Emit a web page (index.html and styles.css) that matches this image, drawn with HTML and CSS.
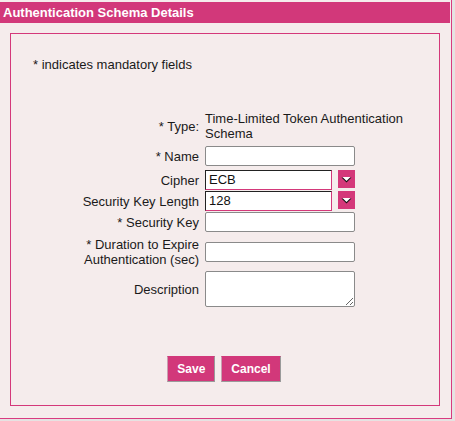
FILE: index.html
```html
<!DOCTYPE html>
<html>
<head>
<meta charset="utf-8">
<link rel="stylesheet" href="styles.css">
</head>
<body>
<div class="panel">
  <div class="panel-head">Authentication Schema Details</div>
  <div class="inner">
    <p class="note">* indicates mandatory fields</p>
    <div class="form">
      <div class="row row-type">
        <div class="label">* Type:</div>
        <div class="value">Time-Limited Token Authentication Schema</div>
      </div>
      <div class="row row-name">
        <div class="label">* Name</div>
        <input class="text" type="text">
      </div>
      <div class="row row-cipher">
        <div class="label">Cipher</div>
        <div class="select">ECB</div>
        <span class="drop"><svg width="17" height="18" viewBox="0 0 17 18"><rect width="17" height="18" fill="#d4387a"/><polygon points="3.5,7.5 13.5,7.5 8.5,12.5" fill="#111"/><polygon points="4.5,7 12.5,7 8.5,11" fill="#fff"/></svg></span>
      </div>
      <div class="row row-skl">
        <div class="label">Security Key Length</div>
        <div class="select">128</div>
        <span class="drop"><svg width="17" height="18" viewBox="0 0 17 18"><rect width="17" height="18" fill="#d4387a"/><polygon points="3.5,7.5 13.5,7.5 8.5,12.5" fill="#111"/><polygon points="4.5,7 12.5,7 8.5,11" fill="#fff"/></svg></span>
      </div>
      <div class="row row-sk">
        <div class="label">* Security Key</div>
        <input class="text" type="text">
      </div>
      <div class="row row-dur">
        <div class="label">* Duration to Expire<br>Authentication (sec)</div>
        <input class="text" type="text">
      </div>
      <div class="row row-desc">
        <div class="label">Description</div>
        <textarea class="area"></textarea>
      </div>
    </div>
    <div class="buttons">
      <button class="btn">Save</button>
      <button class="btn">Cancel</button>
    </div>
  </div>
</div>
</body>
</html>
```

FILE: styles.css
```css
html, body {
  margin: 0;
  padding: 0;
}
body {
  background: #e6e2e2;
  font-family: "Liberation Sans", Arial, sans-serif;
  font-size: 13px;
  color: #1a1a1a;
  height: 421px;
  overflow: hidden;
}
.panel {
  box-sizing: border-box;
  width: 452px;
  height: 419px;
  background: #f5ecec;
  border-right: 1px solid #d93a80;
  border-bottom: 1px solid #d93a80;
  padding: 2px 1px 0 0;
}
.panel-head {
  height: 21px;
  line-height: 21px;
  background: #d2387a;
  color: #fff;
  font-weight: bold;
  font-size: 13px;
  padding-left: 3px;
}
.inner {
  box-sizing: border-box;
  margin: 10px 0 0 10px;
  width: 430px;
  height: 373px;
  border: 1px solid #d4387a;
}
.note {
  margin: 23px 0 0 22px;
  line-height: 15px;
}
.form {
  display: flex;
  flex-direction: column;
  margin-top: 39px;
}
.row {
  display: flex;
  align-items: center;
}
.label {
  width: 188px;
  margin-right: 6px;
  text-align: right;
  line-height: 15px;
  flex: none;
}
.value {
  width: 225px;
  line-height: 15px;
}
.row-name { margin-top: 5px; }
.row-cipher { margin-top: 4px; }
.row-skl { margin-top: 1px; }
.row-sk { margin-top: 1px; }
.row-dur { margin-top: 5px; }
.row-desc { margin-top: 4px; }
.text {
  box-sizing: border-box;
  width: 150px;
  height: 20px;
  margin: 0;
  border: 1px solid #8a8a8a;
  border-radius: 2px;
  background: #fff;
  padding: 0 3px;
  font: 13px "Liberation Sans", Arial, sans-serif;
}
.area {
  box-sizing: border-box;
  width: 150px;
  height: 36px;
  margin: 0;
  border: 1px solid #8a8a8a;
  border-radius: 2px;
  background: #fff;
  padding: 2px 3px;
  font: 13px "Liberation Sans", Arial, sans-serif;
}
.select {
  box-sizing: border-box;
  width: 127px;
  height: 20px;
  line-height: 18px;
  background: #fff;
  border: 1px solid;
  border-color: #222 #d4387a #d4387a #222;
  padding-left: 3px;
  color: #111;
}
.drop {
  display: block;
  width: 17px;
  height: 18px;
  margin-left: 6px;
  align-self: flex-start;
}
.drop svg {
  display: block;
}
.buttons {
  display: flex;
  justify-content: center;
  gap: 6px;
  margin-top: 49px;
  padding-right: 2px;
}
.btn {
  box-sizing: border-box;
  height: 26px;
  margin: 0;
  padding: 0 9px;
  background: #d2387a;
  color: #fff;
  font: bold 12px "Liberation Sans", Arial, sans-serif;
  border: 1px solid;
  border-color: #d2387a #9a9a9a #9a9a9a #c8a0b0;
  border-radius: 0;
}
```
